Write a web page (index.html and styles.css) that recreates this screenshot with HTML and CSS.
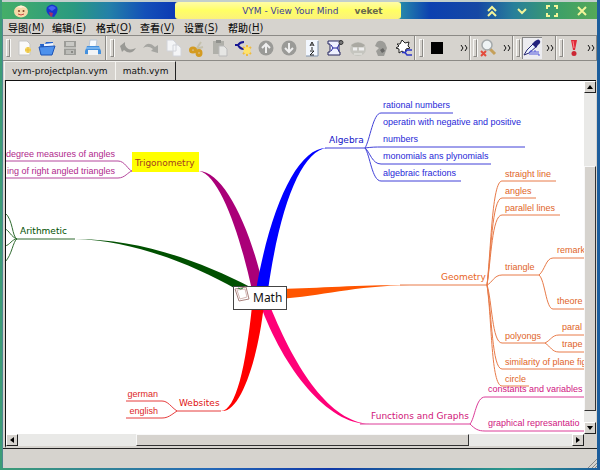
FILE: index.html
```
<!DOCTYPE html>
<html lang="zh-CN">
<head>
<meta charset="utf-8">
<title>VYM - View Your Mind</title>
<link rel="stylesheet" href="styles.css">
</head>
<body>
<header class="titlebar">
  <div class="apps">
    <svg width="16" height="16" viewBox="0 0 16 16"><ellipse cx="8" cy="8.500" rx="7" ry="6" fill="#f6d9a8"/><path d="M2 6Q8-1 14 6Q10 3 8 5Q5 3 2 6z" fill="#fff4dc"/><circle cx="6" cy="8" r="1" fill="#7a4522"/><circle cx="10.500" cy="8" r="1" fill="#7a4522"/><path d="M5 11q3 2 6 0" stroke="#c44" fill="none"/></svg>
    <svg width="14" height="16" viewBox="0 0 14 16"><path d="M2 4Q7-1 12 4Q14 9 9 14L5 13Q0 9 2 4z" fill="#1735cc"/><path d="M3 5q4-4 8 0l-4 3z" fill="#4162f2"/><path d="M4 9l4 1-1 4-2-1z" fill="#a33465"/></svg>
  </div>
  <div class="title"><span>VYM - View Your Mind</span><b>veket</b></div>
  <div class="controls">
    <button aria-label="Shade"><svg width="12" height="12" viewBox="0 0 12 12"><path d="M2 6L6 2L10 6M2 11L6 7L10 11"/></svg></button>
    <button aria-label="Minimize"><svg width="12" height="12" viewBox="0 0 12 12"><path d="M2 4L6 8L10 4"/></svg></button>
    <button aria-label="Maximize"><svg width="12" height="12" viewBox="0 0 12 12"><path d="M1 4V1H4M8 1H11V4M11 8V11H8M4 11H1V8"/></svg></button>
    <button aria-label="Close"><svg width="12" height="12" viewBox="0 0 12 12"><path d="M2 2L10 10M10 2L2 10"/></svg></button>
  </div>
</header>
<main class="window">
  <nav class="menu">
    <button>导图(<u>M</u>)</button><button>编辑(<u>E</u>)</button><button>格式(<u>O</u>)</button><button>查看(<u>V</u>)</button><button>设置(<u>S</u>)</button><button>帮助(<u>H</u>)</button>
  </nav>
  <div class="toolbars">
    <div class="bar file">
      <i class="grip"></i>
      <button aria-label="New"><svg width="18" height="18" viewBox="0 0 18 18"><path d="M4 2H12L15 5V16H4z" fill="#fafafa" stroke="#c5c5c5"/><circle cx="13" cy="11" r="3" fill="#f5d860"/><path d="M13 8v6M10 11h6" stroke="#e8b93c"/></svg></button>
      <button aria-label="Open"><svg width="18" height="18" viewBox="0 0 18 18"><path d="M2 5H7L8 3H15V14H3z" fill="#2463cc"/><path d="M6 5L15 4V10H6z" fill="#eef5ff"/><path d="M1 8L17 7L14 16H3z" fill="#4e91ec" stroke="#1d54b6"/></svg></button>
      <button aria-label="Save"><svg width="18" height="18" viewBox="0 0 18 18"><path d="M3 2H15V16H3z" fill="#9c9c98"/><path d="M5 3H13V7H5z" fill="#c9c9c5"/><path d="M3 9H15" stroke="#e4e4e0"/><path d="M5 11H13V15H5z" fill="#bcbcb8"/><path d="M10 12h2v2h-2z" fill="#8a8a86"/></svg></button>
      <button aria-label="Print"><svg width="18" height="18" viewBox="0 0 18 18"><path d="M6 1H13L12 8H5z" fill="#f7fbff" stroke="#b9c6d6"/><path d="M3 7H15L17 12V15H1V12z" fill="#4490dd"/><path d="M4 11H14V16H4z" fill="#f2f4f6"/><path d="M2 9h14" stroke="#a6d4ff"/></svg></button>
    </div>
    <div class="bar edit">
      <i class="grip"></i>
      <button aria-label="Undo"><svg width="18" height="18" viewBox="0 0 18 18"><path d="M1 7L6 3V6Q9 13 17 9Q12 17 5 11L3 13z" fill="#999995"/></svg></button>
      <button aria-label="Redo"><svg width="18" height="18" viewBox="0 0 18 18"><path d="M1 9Q6 1 13 8L16 6V14L9 12L11 10Q6 6 1 9z" fill="#a5a5a1"/></svg></button>
      <button aria-label="Copy"><svg width="18" height="18" viewBox="0 0 18 18"><path d="M2 1H8L11 4V12H2zM8 6H13L16 9V17H8z" fill="#f4f5f7" stroke="#d2d4da"/></svg></button>
      <button aria-label="Cut"><svg width="18" height="18" viewBox="0 0 18 18"><path d="M9 9L13 3M8 10L15 8" stroke="#c4c0ac" stroke-width="2"/><g fill="none" stroke="#d49b21" stroke-width="3"><ellipse cx="5" cy="11" rx="2.500" ry="2"/><ellipse cx="11" cy="14" rx="2" ry="2.500"/></g></svg></button>
      <button aria-label="Paste"><svg width="18" height="18" viewBox="0 0 18 18"><path d="M2 2H13V15H2z" fill="#b0b0aa"/><path d="M5 1H10V4H5z" fill="#8f908c"/><path d="M8 7H13L16 10V17H8z" fill="#e6e6e4" stroke="#bbb"/></svg></button>
      <button aria-label="Add branch"><svg width="18" height="18" viewBox="0 0 18 18"><path d="M1 6H4Q6 3 10 3M4 6Q6 10 10 10" fill="none" stroke="#171793" stroke-width="2"/><path d="M13 6v11M9 8l8 7M9 15l8-7" stroke="#eebb40" stroke-width="2"/><circle cx="13" cy="11.500" r="3.500" fill="#ffe36b"/></svg></button>
      <button aria-label="Move up"><svg width="18" height="18" viewBox="0 0 18 18"><circle cx="9" cy="9" r="7.500" fill="#9a9a97"/><path d="M9 14V5M5 9L9 5L13 9" fill="none" stroke="#eee" stroke-width="2"/></svg></button>
      <button aria-label="Move down"><svg width="18" height="18" viewBox="0 0 18 18"><circle cx="9" cy="9" r="7.500" fill="#9a9a97"/><path d="M9 4V13M5 9L9 13L13 9" fill="none" stroke="#eee" stroke-width="2"/></svg></button>
      <button aria-label="Sort"><svg width="18" height="18" viewBox="0 0 18 18"><path d="M3 1H15V17H3z" fill="#f2f7ff"/><path d="M3 17H15V2" fill="none" stroke="#7e91ab"/><path d="M7 7L9 3L11 7M8 6h2M9 8v3M7 12H11L7 16H11" fill="none" stroke="#222"/></svg></button>
      <button aria-label="Scroll branch"><svg width="18" height="18" viewBox="0 0 18 18"><path d="M2 2H15V5H13V13H14V16H2V13H4V5H2z" fill="#eef0ff" stroke="#25255f"/><circle cx="15" cy="3.500" r="2" fill="#777" stroke="#333"/><path d="M5 6l2 3h4l2-3M5 12l2-3M11 9l2 3" fill="none" stroke="#24249d"/></svg></button>
      <button aria-label="Link"><svg width="18" height="18" viewBox="0 0 18 18"><ellipse cx="9" cy="10" rx="8" ry="7" fill="#c5c5bf"/><path d="M2 6Q9 1 16 6L14 8H4z" fill="#aaa9a2"/><path d="M4 10h4M10 10h5" stroke="#eee" stroke-width="3"/><path d="M5 15h8" stroke="#eeeeea"/></svg></button>
      <button aria-label="Note"><svg width="18" height="18" viewBox="0 0 18 18"><path d="M5 3Q9 0 13 4L15 9L12 17H6L4 12L7 9L3 7z" fill="#9c9c98"/><path d="M8 11l3-2 2 3-3 2z" fill="#686866"/></svg></button>
      <button aria-label="Cloud"><svg width="18" height="18" viewBox="0 0 18 18"><path d="M2 5L5 5L7 1L10 4L14 3L13 7L15 9L11 10L10 14L7 12L4 14L4 10L1 9L4 7z" fill="#fff" stroke="#222"/><path d="M17 11H12L10 13.500L12 16H17M10 13.500H7" fill="none" stroke="#2b36c8" stroke-width="1.500"/></svg></button>
    </div>
    <div class="bar color"><i class="grip"></i><button aria-label="Color"><span class="swatch"></span></button><button class="more" aria-label="More colors"><svg width="8" height="8" viewBox="0 0 8 8"><path d="M1 1L3 4L1 7M5 1L7 4L5 7"/></svg></button></div>
    <div class="bar zoom"><i class="grip"></i><button aria-label="Reset zoom"><svg width="18" height="18" viewBox="0 0 18 18"><path d="M11 10L16 15" stroke="#c5a05a" stroke-width="3"/><circle cx="8" cy="6" r="5" fill="#eef3f5" stroke="#a3a8aa" stroke-width="1.500"/><path d="M2 12L7 17M7 12L2 17" stroke="#e44b3c" stroke-width="2"/></svg></button><button class="more" aria-label="More zoom"><svg width="8" height="8" viewBox="0 0 8 8"><path d="M1 1L3 4L1 7M5 1L7 4L5 7"/></svg></button></div>
    <div class="bar modes"><i class="grip"></i><button class="on" aria-label="Color mode"><svg width="18" height="18" viewBox="0 0 18 18"><path d="M1 16L4 11L11 4L14 7L6 14z" fill="#edf4ff" stroke="#252570"/><path d="M9 5L12 2Q16-1 17 2Q18 4 15 6L13 9z" fill="#23237d"/><path d="M7 16V12H9V16M11 16V12H13V16M15 12V16H17" fill="none" stroke="#5358dc"/></svg></button><button class="more" aria-label="More modes"><svg width="8" height="8" viewBox="0 0 8 8"><path d="M1 1L3 4L1 7M5 1L7 4L5 7"/></svg></button></div>
    <div class="bar flags"><i class="grip"></i><button aria-label="Important"><svg width="18" height="18" viewBox="0 0 18 18"><path d="M6 1H12L10 11H8z" fill="#df2938"/><path d="M8 2L9 9" stroke="#ff8990"/><circle cx="9" cy="14.500" r="2.500" fill="#cc2633"/></svg></button><button class="more" aria-label="More flags"><svg width="8" height="8" viewBox="0 0 8 8"><path d="M1 1L3 4L1 7M5 1L7 4L5 7"/></svg></button></div>
  </div>
  <div class="tabs"><button>vym-projectplan.vym</button><button class="active">math.vym</button></div>
  <section class="view">
    <svg class="map" aria-label="Math mind map">
      <g transform="translate(-6 -81)">
        <path fill="#005000" d="M17 239H75C135 239 195 258 252 288L236 289C190 263 130 240 75 239z"/>
        <path fill="#aa0078" d="M199 171C223 171 250 225 264 290L252 290C240 235 220 175 199 171z"/>
        <path fill="#0000ff" d="M327 148C302 150 280 205 268 290L256 290C271 205 298 147 327 148z"/>
        <path fill="#ff5500" d="M410 285C355 285 320 288 280 289V299C320 296 355 286 410 285z"/>
        <path fill="#ff0078" d="M370 424C330 422 296 370 270 306L260 304C284 370 328 425 370 424z"/>
        <path fill="#ff0000" d="M221 411C236 411 246 365 252 306L264 304C258 360 240 414 221 411z"/>
        <g class="lines">
          <path class="green" d="M75 239H17C12 237 13 219 5 213M17 239C11 237 9 230 5 229M17 239C12 239 10 245 5 246M17 239C13 241 12 255 5 262"/>
          <path class="purple" d="M5 161H118C125 161 128 170 132 171C128 172 125 178 118 178H5"/>
          <path class="blue" d="M325 148H365C370 140 373 113 381 113H453M365 148C372 147 376 147 381 147H525M365 148C370 152 372 164 381 164H491M365 148C370 155 372 181 381 181H461"/>
          <path class="orange" d="M400 285H487C491 250 492 181 502 181H556M487 285C491 255 492 198 502 198H536M487 285C491 260 492 215 502 215H560M487 285C492 283 494 275 502 275H539C545 270 546 258 553 258H584M539 275C545 280 546 309 553 309H584M487 285C492 300 492 343 502 343H545C551 340 552 335 559 335H584M545 343C551 347 552 352 559 352H584M487 285C492 315 492 369 502 369H584M487 285C492 320 491 386 502 386H529"/>
          <path class="pink" d="M360 424H470C475 418 476 397 485 397H584M470 424C475 429 478 431 485 431H584"/>
          <path class="red" d="M221 411H177C171 407 168 401 162 401H126M177 411C171 415 168 418 162 418H126"/>
        </g>
        <rect x="132" y="152" width="67" height="20" fill="#ffff00"/>
        <g class="main-labels">
          <text x="135" y="166" fill="#a33c20">Trigonometry</text>
          <text x="20" y="234" fill="#005000">Arithmetic</text>
          <text x="329" y="143" fill="#1414c8">Algebra</text>
          <text x="441" y="280" fill="#e8641e">Geometry</text>
          <text x="371" y="419" fill="#d01478">Functions and Graphs</text>
          <text x="179" y="406" fill="#e01414">Websites</text>
        </g>
        <g class="labels">
          <g fill="#b0288c" text-anchor="end"><text x="115" y="157">degree measures of angles</text><text x="115" y="174">ing of right angled triangles</text></g>
          <g fill="#2828d8"><text x="383" y="108">rational numbers</text><text x="383" y="125">operatin with negative and positive</text><text x="383" y="142">numbers</text><text x="383" y="159">monomials ans plynomials</text><text x="383" y="176">algebraic fractions</text></g>
          <g fill="#e06428"><text x="505" y="177">straight line</text><text x="505" y="194">angles</text><text x="505" y="211">parallel lines</text><text x="557" y="253">remark</text><text x="505" y="270">triangle</text><text x="557" y="304">theore</text><text x="505" y="339">polyongs</text><text x="562" y="330">paral</text><text x="562" y="347">trape</text><text x="505" y="365">similarity of plane fig</text><text x="505" y="382">circle</text></g>
          <g fill="#d01482"><text x="488" y="392">constants and variables</text><text x="488" y="426">graphical represantatio</text></g>
          <g fill="#dc1e1e" text-anchor="end"><text x="158" y="397">german</text><text x="158" y="414">english</text></g>
        </g>
        <rect x="233.500" y="286.500" width="53" height="23" fill="#fff" stroke="#444"/>
        <path d="M235 289L246 287L249 299L239 301z" fill="#fff" stroke="#a9837f"/><path d="M237 290L245 289L247 297L240 299z" fill="#fff" stroke="#d5b9b5"/><path d="M238 288q3 2 5 0" fill="none" stroke="#2e8a3a"/>
        <text class="root-label" x="253" y="302">Math</text>
      </g>
    </svg>
    <div class="scroll vertical"><button aria-label="Scroll up"><svg width="6" height="4" viewBox="0 0 6 4"><path d="M0 4L3 0L6 4z"/></svg></button><div class="track"><div class="thumb"></div></div><button aria-label="Scroll down"><svg width="6" height="4" viewBox="0 0 6 4"><path d="M0 0L3 4L6 0z"/></svg></button></div>
    <div class="scroll horizontal"><button aria-label="Scroll left"><svg width="4" height="6" viewBox="0 0 4 6"><path d="M4 0L0 3L4 6z"/></svg></button><div class="track"><div class="thumb"></div></div><button aria-label="Scroll right"><svg width="4" height="6" viewBox="0 0 4 6"><path d="M0 0L4 3L0 6z"/></svg></button></div>
  </section>
  <footer class="status"><svg width="10" height="10" viewBox="0 0 10 10"><path d="M1 10L10 1M5 10L10 5M8 10L10 8" stroke="#888"/></svg></footer>
</main>
</body>
</html>
```
FILE: styles.css
```
* { box-sizing: border-box; }
body {
  margin: 0;
  height: 100vh;
  display: flex;
  flex-direction: column;
  padding: 0 3px 2px 2px;
  overflow: hidden;
  background: linear-gradient(90deg, #3d9d76, #2468b8 35%, #1038a8 55%, #2c9a88 85%, #1c5c9c);
  font-family: "DejaVu Sans", "Noto Sans CJK SC", sans-serif;
  font-size: 9px;
  color: #111;
}
button { border: 0; padding: 0; margin: 0; background: none; font: inherit; color: inherit; display: flex; align-items: center; justify-content: center; }
svg { display: block; flex: none; }

.titlebar {
  display: grid;
  grid-template-columns: 29fr 38fr 33fr;
  flex: 0 0 19px;
  border-top: 2px solid #c3cfcc;
  background: linear-gradient(90deg, #45ae68, #2a9a80 12%, #2380a8 18%, #1450b8 24%, #0c3ab4 29%, #2688aa 67%, #0c40b0 72%, #1648a4 80%, #277f9a 86%, #3fa066 94%, #55a858);
}
.apps { display: flex; align-items: center; gap: 16px; padding-left: 11px; }
.title {
  display: flex;
  align-items: center;
  justify-content: flex-end;
  gap: 16px;
  padding-right: 18px;
  border-radius: 3px;
  background: linear-gradient(#fffca8, #ffff64 50%, #fbf27a);
  color: #3a3ca0;
}
.title b { color: #68684e; }
.controls { display: flex; align-items: center; justify-content: flex-end; gap: 18px; padding-right: 9px; }
.controls path { fill: none; stroke: #f2f59a; stroke-width: 2; }

.window {
  flex: 1;
  min-height: 0;
  display: flex;
  flex-direction: column;
  background: #d6d3ce;
  border-left: 1px solid #4f8790;
}
.menu { display: flex; flex: 0 0 16px; padding-left: 5px; font-size: 10px; font-weight: 500; }
.menu button { width: 44px; justify-content: flex-start; white-space: nowrap; }
.menu u { text-underline-offset: 2px; }

.toolbars { display: flex; flex: 0 0 26px; border-top: 1px solid #8c8a86; border-bottom: 1px solid #8c8a86; }
.bar { display: flex; align-items: center; gap: 5px; padding-left: 3px; border-left: 1px solid #f4f3f0; border-right: 1px solid #8c8a86; }
.bar:first-child { border-left: 0; }
.grip { width: 4px; height: 18px; border: 1px solid; border-color: #f8f8f6 #8c8a86 #8c8a86 #f8f8f6; box-shadow: 1px 0 #f8f8f6; }
.file { flex: 0 0 103px; }
.edit { flex: 0 0 309px; }
.color { flex: 0 0 55px; }
.color .grip { margin-right: 3px; }
.zoom, .modes { flex: 0 0 43px; }
.flags { flex: 1; }
.zoom, .modes, .flags { gap: 2px; padding-left: 2px; }
.swatch { width: 12px; height: 12px; background: #000; }
.more { margin-left: auto; padding-right: 1px; }
.more path { fill: none; stroke: #111; stroke-width: 1; }
.on { width: 20px; height: 22px; background: #ececf0; box-shadow: inset 1px 1px #888; }

.tabs { display: flex; flex: 0 0 19px; padding-left: 1px; }
.tabs button { padding: 0 7px; border-left: 1px solid #f4f3f0; border-top: 1px solid #f4f3f0; }
.tabs .active { border-right: 1px solid #222; }

.view {
  flex: 1;
  min-height: 0;
  margin: 0 1px 0 2px;
  display: grid;
  grid-template-columns: 1fr 12px;
  grid-template-rows: 1fr 12px;
  border-top: 1px solid #111;
  border-left: 1px solid #111;
  border-bottom: 2px solid #d6d3ce;
}
.map { width: 100%; height: 100%; min-width: 0; min-height: 0; overflow: hidden; background: #fff; }
.lines { fill: none; stroke-width: 1; }
.green { stroke: #2f6b2f; }
.purple { stroke: #b4469c; }
.blue { stroke: #4040d8; }
.orange { stroke: #e87a48; }
.pink { stroke: #dc3c98; }
.red { stroke: #e63c3c; }
.main-labels { font-size: 9px; }
.labels { font-family: "Liberation Sans", sans-serif; font-size: 9px; }
.root-label { font-family: "Noto Sans", sans-serif; font-size: 12px; fill: #111; }

.scroll { display: flex; background: #e9e9e7; }
.scroll button { flex: 0 0 12px; background: #d6d3ce; border: 1px solid; border-color: #fff #222 #222 #fff; }
.track { flex: 1; display: flex; }
.thumb { background: #d6d3ce; border: 1px solid; border-color: #f8f8f8 #333 #333 #f8f8f8; }
.vertical { flex-direction: column; }
.vertical .track { flex-direction: column; padding: 73px 0 11px; }
.vertical .thumb { flex: 1; }
.horizontal .track { padding: 0 103px 0 118px; }
.horizontal .thumb { flex: 1; }

.status { flex: 0 0 20px; display: flex; align-items: flex-end; justify-content: flex-end; border-top: 1px solid #222; }
```
